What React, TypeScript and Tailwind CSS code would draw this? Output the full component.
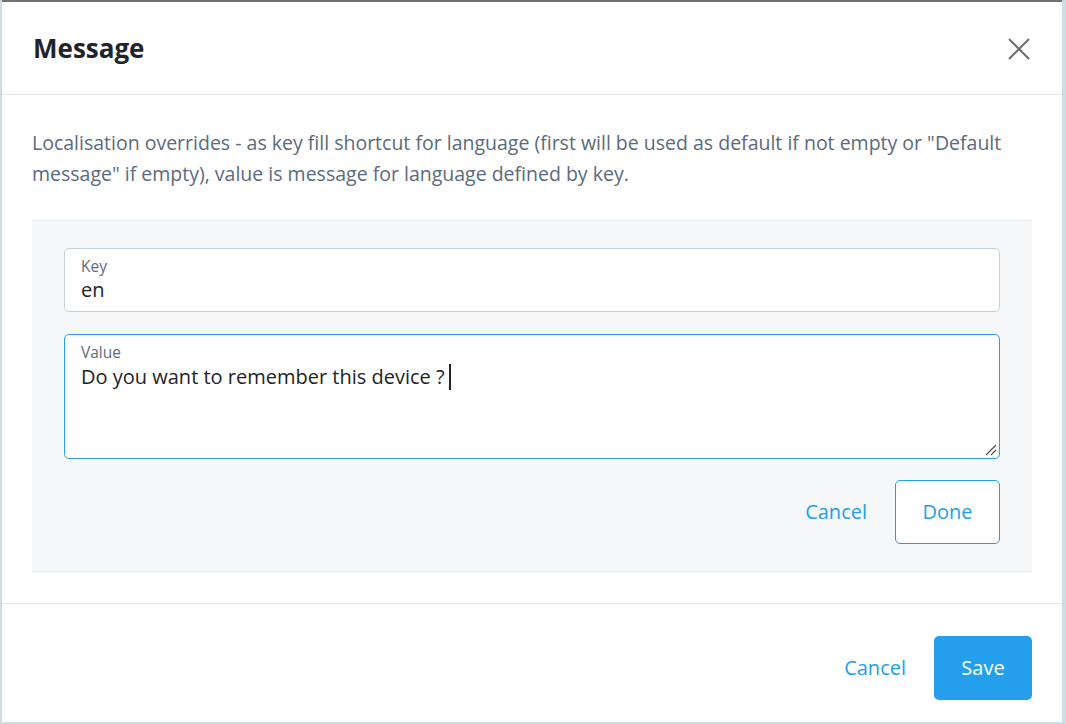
export default function App() {
    return (
        <div className="w-[1066px] h-[724px] bg-[#cfdce4] pl-[2px] pr-[4px] pb-[2px] font-['Open_Sans',sans-serif]">
            <div className="h-full flex flex-col bg-white border-t-2 border-[#6f7479]">
                <div className="h-[93px] shrink-0 flex items-center justify-between pl-[31px] pr-[32px] border-b border-[#e5e9ee]">
                    <h2 className="text-[26px] font-bold text-[#20242a] leading-none">Message</h2>
                    <svg width="22" height="22" viewBox="0 0 22 22" className="mt-[2px]">
                        <path d="M1 1 L21 21 M21 1 L1 21" stroke="#6b6f74" strokeWidth="2" />
                    </svg>
                </div>

                <div className="px-[30px] pt-[32px]">
                    <p className="text-[19.5px] leading-[31px] text-[#5b6a7d]">
                        Localisation overrides - as key fill shortcut for language (first will be used as default if not empty or "Default message" if empty), value is message for language defined by key.
                    </p>

                    <div className="mt-[31px] bg-[#f5f7f9] border-y border-[#e6ecf1] px-[32px] pt-[27px] pb-[27px]">
                        <div className="h-[64px] bg-white border border-[#c8d0d9] rounded-[5px] px-[16px] pt-[7px]">
                            <p className="text-[15.5px] leading-[20px] text-[#5e6b7b]">Key</p>
                            <p className="text-[20px] leading-[28px] text-[#20242a]">en</p>
                        </div>

                        <div className="relative mt-[22px] h-[125px] bg-white border border-[#2c9ee3] rounded-[5px] px-[16px] pt-[7px]">
                            <p className="text-[15.5px] leading-[20px] text-[#5e6b7b]">Value</p>
                            <p className="text-[20px] leading-[30px] text-[#20242a] flex items-center">
                                Do you want to remember this device ?
                                <span className="inline-block ml-[4px] w-[2px] h-[26px] bg-[#20242a]" />
                            </p>
                            <svg className="absolute right-[2px] bottom-[2px]" width="14" height="14" viewBox="0 0 14 14">
                                <path d="M3 13 L13 3 M8 13 L13 8" stroke="#555" strokeWidth="1.3" />
                            </svg>
                        </div>

                        <div className="mt-[21px] flex items-center justify-end gap-[28px]">
                            <button className="text-[20px] text-[#229fea]">Cancel</button>
                            <button className="w-[105px] h-[64px] border border-[#229fea] rounded-[5px] text-[20px] text-[#229fea] bg-white">Done</button>
                        </div>
                    </div>
                </div>

                <div className="mt-[31px] border-t border-[#e5e9ee] flex-1 flex items-start justify-end gap-[28px] pr-[30px] pt-[32px]">
                    <button className="h-[64px] text-[20px] text-[#229fea]">Cancel</button>
                    <button className="w-[98px] h-[64px] rounded-[5px] bg-[#239fec] text-white text-[20px] font-medium">Save</button>
                </div>
            </div>
        </div>
    );
}
